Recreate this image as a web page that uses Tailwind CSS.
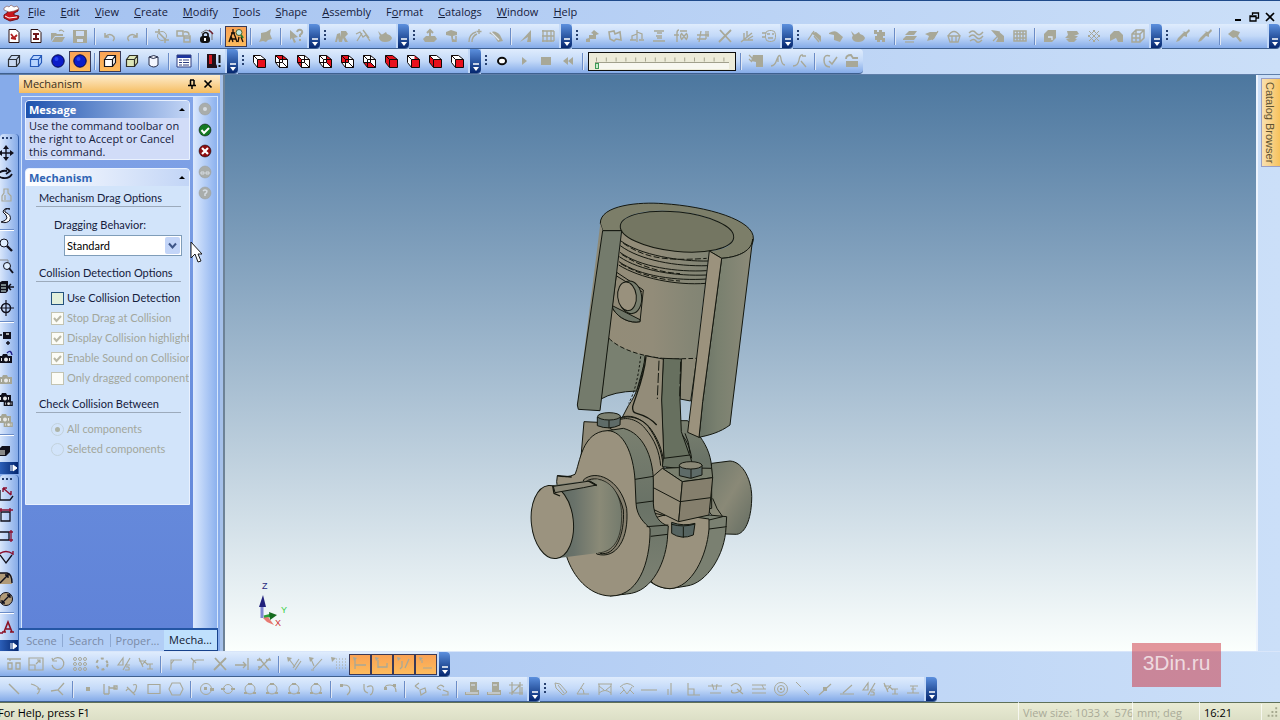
<!DOCTYPE html>
<html lang="en">
<head>
    <meta charset="UTF-8">
    <meta name="viewport" content="width=device-width, initial-scale=1.0">
    <title>Mechanism</title>
    <script src="https://cdn.jsdelivr.net/npm/@tailwindcss/browser@4"></script>
</head>
<body class="h-screen flex flex-col overflow-hidden bg-linear-to-r from-[#a3c1f0] to-[#cbdff8] text-[#15203c] text-[11px] leading-4 font-['Open_Sans',sans-serif]">

    <!-- Menu bar -->
    <header class="flex items-center h-6 shrink-0 border-t border-[#1f4a8a] pl-[2px] pr-1">
        <svg class="w-[18px] h-[18px]" viewBox="0 0 18 18">
            <path d="M2 5l4 2-1 2-3 2v3l6 3 8-2 1-3-5-1V9l4-2V4z" fill="#c8141c" stroke="#701015"/>
            <path d="M2 4l3-2 2 1 2-2 3 2 3-1 2 3-5 2-5 1-5-2z" fill="#fff" stroke="#7a4a4a" stroke-width=".6"/>
            <path d="M3 12l4 2 8-1" stroke="#fff" fill="none"/>
        </svg>
        <nav class="flex items-center gap-[15px] ml-2 pb-px" id="menu"></nav>
        <div class="ml-auto mt-2 flex items-center gap-1 text-black">
            <button aria-label="Minimize" class="w-3 h-3"><svg viewBox="0 0 12 12"><path d="M3 9h6" stroke="currentColor" stroke-width="2"/></svg></button>
            <button aria-label="Restore" class="w-3 h-3"><svg viewBox="0 0 12 12" fill="none" stroke="currentColor" stroke-width="1.3"><path d="M4.500 4V2h6v5H8M2 5h6v5H2zM2 5.500h6"/></svg></button>
            <button aria-label="Close" class="w-3 h-3"><svg viewBox="0 0 12 12"><path d="M2 2l8 8M10 2l-8 8" stroke="currentColor" stroke-width="1.700"/></svg></button>
        </div>
    </header>

    <!-- Top toolbars -->
    <div class="flex h-[25px] shrink-0">
        <div data-tools="newdoc newpart open save | undo redo | orbit copybox locked | *tree | blob | help" data-cap></div>
        <div data-tools=": people zigzag teapot" data-cap></div>
        <div data-tools=": extrude lathe sweep shell | letter mesh" data-cap></div>
        <div data-tools=": stepup loftbox fork springs fx hash cross leafy mask" data-cap></div>
        <div data-tools=": fillet ball teapot gears | layers patch basket waves stripes grid | block1 stack weave block2 block3" data-cap></div>
        <div data-tools=": pipette pipette | hammer" data-cap data-grow></div>
    </div>
    <div class="flex h-[26px] shrink-0 border-b border-[#5f7ea8]">
        <div data-tools="wire wireblue sphere *sphere | *boxsolid boxhidden cylinder | list | book" data-cap></div>
        <div data-tools=": face1 face2 face3 face4 face5 face6 face7 face8 face9 face10" data-cap></div>
        <div data-tools=": record play stop rewind | @slider | keys curve1 curve2 | loop movie"></div>
    </div>

    <!-- Work area -->
    <main class="flex flex-1 min-h-0">
        <!-- Vertical toolbars -->
        <aside class="w-[19px] shrink-0 flex flex-col overflow-hidden bg-[#86abea]">
            <div class="h-[59px] shrink-0"></div>
            <div data-side=": move rotate *figure spline | zoom zoomwin cubein target | cubemove camrot *cam cams *cams2 | cubedown"></div>
            <div data-side=": dim1 dim2 dim3 dim4 dim5 dim6 | dimtext"></div>
        </aside>

        <!-- Mechanism panel -->
        <section class="w-[201px] shrink-0 flex flex-col bg-[#86abea]">
            <div class="h-[18px] shrink-0 flex items-center pl-1 pr-1 bg-linear-to-b from-[#fdeccb] to-[#f5bd5e] text-[#3a3020]">
                <h1 class="mr-auto">Mechanism</h1>
                <button aria-label="Pin" class="w-4 h-4 text-black"><svg viewBox="0 0 16 16" fill="none" stroke="currentColor" stroke-width="1.500"><path d="M6 4h4M6.500 4v5M10 4v5M4 9.500h8M8 9v4"/></svg></button>
                <button aria-label="Close panel" class="w-4 h-4 text-black"><svg viewBox="0 0 16 16"><path d="M4.500 4.500l7 7M11.500 4.500l-7 7" stroke="currentColor" stroke-width="1.700"/></svg></button>
            </div>
            <div class="flex flex-1 min-h-0 mt-[3px] mx-[2px] border-t border-l border-r border-[#d6e7fd]">
                <div class="flex-1 min-w-0 px-[3px] pt-[3px] bg-linear-to-b from-[#83a5e8] via-[#6b90de] to-[#6083d8]">
                    <section class="border border-[#e9f1fe] rounded-t-sm overflow-hidden bg-[#d1dcf8]">
                        <div class="h-[17px] flex items-center justify-between px-[3px] bg-linear-to-r from-[#1d52ad] to-[#c3d5f5]">
                            <h2 class="text-white font-bold">Message</h2>
                            <button aria-label="Collapse message" class="text-black"><svg class="w-[9px] h-2" viewBox="0 0 9 8"><path d="M2 5l3-3 3 3z" fill="currentColor"/></svg></button>
                        </div>
                        <p class="px-[3px] pt-px pb-px leading-[13px]">Use the command toolbar on the right to Accept or Cancel this command.</p>
                    </section>
                    <section class="mt-2 border border-[#e9f1fe] rounded-t-sm overflow-hidden bg-[#d2e4fa] font-[Lato,sans-serif]">
                        <div class="h-[17px] flex items-center justify-between px-[3px] bg-linear-to-r from-white to-[#c2d5f6] font-['Open_Sans',sans-serif]">
                            <h2 class="text-[#2f64b4] font-bold">Mechanism</h2>
                            <button aria-label="Collapse mechanism" class="text-black"><svg class="w-[9px] h-2" viewBox="0 0 9 8"><path d="M2 5l3-3 3 3z" fill="currentColor"/></svg></button>
                        </div>
                        <div class="pl-[10px] pt-1 pb-[45px]">
                            <h3 class="pl-[3px] mr-2 border-b border-[#9caabb]">Mechanism Drag Options</h3>
                            <label for="drag" class="block mt-[10px] pl-[18px]">Dragging Behavior:</label>
                            <div class="relative ml-7 mr-[7px] mt-[2px]">
                                <select id="drag" class="block w-full h-[21px] appearance-none border border-[#7f9db9] bg-white text-black pl-[2px]">
                                    <option>Standard</option>
                                </select>
                                <svg class="absolute right-[2px] top-[2px] w-[15px] h-[17px] pointer-events-none" viewBox="0 0 15 17"><rect width="15" height="17" rx="2" fill="#c3d5f8"/><path d="M4 6.500l3.500 4 3.500-4" fill="none" stroke="#3f5688" stroke-width="2"/></svg>
                            </div>
                            <h3 class="pl-[3px] mr-2 mt-[9px] border-b border-[#9caabb]">Collision Detection Options</h3>
                            <div class="mt-[6px] pl-[15px]" id="checks"></div>
                            <h3 class="pl-[3px] mr-2 mt-2 border-b border-[#9caabb]">Check Collision Between</h3>
                            <div class="mt-[6px] pl-[15px]" id="radios"></div>
                        </div>
                    </section>
                </div>
                <!-- Command toolbar -->
                <div class="w-6 shrink-0 flex flex-col items-center gap-[5px] pt-1 bg-linear-to-r from-[#dce9fd] to-[#8cb1ee]" id="commands"></div>
            </div>
            <div class="h-[23px] shrink-0 flex items-stretch border-t-2 border-[#2456a5] pl-[2px] mr-[2px] bg-[#b2cef6] text-[#7a8aa6]" role="tablist">
                <button role="tab" class="w-[42px] text-center border-r border-[#8ea9d3] my-1 leading-[14px]">Scene</button>
                <button role="tab" class="w-[48px] text-center border-r border-[#8ea9d3] my-1 leading-[14px]">Search</button>
                <button role="tab" class="w-[53px] text-center my-1 leading-[14px]">Proper...</button>
                <button role="tab" aria-selected="true" class="flex-1 bg-[#bfe0fd] border-b border-r border-[#17428c] text-[#101830]">Mecha...</button>
            </div>
        </section>
        <div class="w-[5px] shrink-0 bg-[#a6c1ea] border-r-2 border-[#6d8296]"></div>

        <!-- 3D view -->
        <section class="relative flex-1 min-w-0 overflow-hidden bg-linear-to-b from-[#4c779f] to-[#fbfffd]">
            <svg class="absolute left-[295px] top-[120px] w-[250px] h-[410px]" viewBox="0 0 750 1230" fill="none" stroke="#14170f" stroke-width="3" stroke-linejoin="round" role="img" aria-label="Piston and crankshaft assembly">
                <defs>
                    <linearGradient id="wall"><stop offset="0" stop-color="#697265"/><stop offset=".35" stop-color="#79806f"/><stop offset="1" stop-color="#8d8b79"/></linearGradient>
                    <linearGradient id="piston"><stop offset="0" stop-color="#938c78"/><stop offset=".35" stop-color="#928c79"/><stop offset=".65" stop-color="#858675"/><stop offset="1" stop-color="#7c8172"/></linearGradient>
                    <linearGradient id="shaft"><stop offset="0" stop-color="#59635b"/><stop offset=".35" stop-color="#69726a"/><stop offset=".7" stop-color="#8a8a77"/><stop offset="1" stop-color="#747b6d"/></linearGradient>
                    <linearGradient id="rear" x1="0" y1="0" x2="1" y2="1"><stop offset="0" stop-color="#6f786b"/><stop offset=".5" stop-color="#8a8977"/><stop offset="1" stop-color="#646d62"/></linearGradient>
                    <linearGradient id="side" x1="0" y1="0" x2="0" y2="1"><stop offset="0" stop-color="#7a8070"/><stop offset=".45" stop-color="#697266"/><stop offset="1" stop-color="#7e8374"/></linearGradient>
                </defs>
                <!-- cylinder bore behind the piston -->
                <path d="M265 425L243 612Q280 590 350 588L380 480Z" fill="#798070"/>
                <path d="M484 480L532 480L512 618L480 612Z" fill="#8b8876"/>
                <!-- rear shaft and web -->
                <path d="M575 805L630 798C670 800 698 860 695 915C693 975 675 1015 650 1018L617 1017L560 940Z" fill="url(#rear)"/>
                <path d="M480 677L503 677L540 725C562 755 576 790 575 830L575 940L520 950L430 800Z" fill="url(#side)"/>
                <path d="M400 945L567 960L620 965L618 997C615 1080 560 1165 500 1173L450 1181C425 1180 400 1170 385 1155Z" fill="#7a8071"/>
                <path d="M410 950L567 972L567 1002C560 1085 515 1178 450 1181C425 1180 400 1170 390 1155Z" fill="#9a927e"/>
                <path d="M567 975L608 965M567 1002L620 995M578 910Q590 945 608 965" />
                <!-- piston -->
                <path d="M301 95L305 107L290 230L268 400L267 430C300 465 380 490 460 492L530 490L545 350L568 168L640 130Z" fill="url(#piston)" stroke="none"/>
                <path d="M267 430C300 465 380 490 460 492L530 490" stroke-dasharray="14 7"/>
                <path d="M303 138C360 180 480 200 566 198M301 152C360 196 470 215 563 212M300 172C360 216 470 232 560 227M298 185C360 228 470 244 560 240M297 200C360 244 470 258 560 252M296 210C360 250 470 272 558 265"/>
                <path d="M310 145C370 184 420 200 560 190M305 178C360 214 420 232 480 236M302 206C360 240 420 254 480 258" stroke-dasharray="18 7"/>
                <path d="M290 232L370 285L360 380C330 386 296 370 279 342L277 330Z" fill="#8f8976"/>
                <path d="M277 332L360 374L360 380C330 386 296 370 279 342Z" fill="#6e7567"/>
                <path d="M290 243L366 290"/>
                <ellipse cx="331" cy="307" rx="34" ry="49" transform="rotate(-6 331 307)" fill="#777d6d"/>
                <ellipse cx="321" cy="304" rx="28" ry="43" transform="rotate(-6 321 304)" fill="#99917d"/>
                <!-- cylinder -->
                <path stroke="none" fill-rule="evenodd" d="M248 107L241 85C240 30 360 20 430 26C560 34 705 75 700 132C698 165 660 186 605 190L568 168C610 166 640 150 641 128C640 85 540 48 430 47C355 46 300 65 301 95L305 107Z" fill="#7c7e69"/>
                <path d="M305 107L248 107L241 85C240 30 360 20 430 26C560 34 705 75 700 132C698 165 660 186 605 190L568 168"/>
                <ellipse cx="471" cy="110" rx="171" ry="59" transform="rotate(6 471 110)" fill="#747662"/>
                <path d="M241 85L248 107L180 600L172 635Z" fill="#8d8a78" stroke="none"/>
                <path d="M248 107L305 107L240 647L175 643L172 630Z" fill="#747b6c"/>
                <path d="M605 190C660 186 697 165 698 132L637 630L630 690C600 712 570 720 537 727L548 620Z" fill="url(#wall)"/>
                <path d="M568 168L605 190L548 620L537 727L503 712L515 615Z" fill="#9b927d"/>
                <!-- connecting rod -->
                <path d="M430 490L484 492L480 615L484 710L512 790L432 800L424 615Z" fill="#67705f"/>
                <path d="M375 482L430 492L425 615L432 800L300 680L325 632C350 600 370 540 375 482Z" fill="#938c79"/>
                <path d="M362 484C355 545 345 590 326 625" stroke-dasharray="7 6"/>
                <path d="M378 484C372 550 348 600 338 635Q336 653 350 655Q388 665 410 690" stroke-width="4"/>
                <path d="M417 497L412 612M482 500L479 605" stroke-dasharray="30 7"/>
                <!-- big end -->
                <path d="M192 680L235 682L300 695L290 760L180 810L183 785Z" fill="#8f8976"/>
                <path d="M270 700C295 650 350 655 385 695C410 730 425 765 430 815L500 940L400 970L340 740Z" fill="#928b78"/>
                <path d="M290 680C315 660 355 675 375 700C405 735 418 770 422 812M300 671C325 658 365 670 387 695C414 729 426 765 430 795"/>
                <path d="M430 790L510 780L515 800L475 820L427 815Z" fill="#697162"/>
                <path d="M487 720Q510 750 515 790M495 715Q508 740 510 775"/>
                <!-- clamp block -->
                <path d="M427 820L475 818L575 820L578 848L487 860Z" fill="#7a7f6e"/>
                <path d="M398 845L427 820L487 860L476 980L400 943Z" fill="#948d79"/>
                <path d="M487 860L578 848L567 960L476 980Z" fill="#857f6d"/>
                <path d="M400 878L480 920L572 908"/>
                <path d="M478 812L478 842L512 850L546 840L546 810Z" fill="#5e6b68"/>
                <ellipse cx="512" cy="811" rx="34" ry="11" fill="#8a8876"/>
                <path d="M513 822V850"/>
                <path d="M455 982L455 1015Q485 1035 520 1020L525 985Q490 995 455 982Z" fill="#566461"/>
                <path d="M455 988Q490 998 525 987M490 995V1028"/>
                <path d="M232 666L232 692Q268 706 300 690L301 664Z" fill="#5e6b68"/>
                <ellipse cx="267" cy="664" rx="34" ry="11" fill="#7c8070"/>
                <path d="M267 676V700"/>
                <!-- front web -->
                <path d="M262 707L310 700C370 715 398 785 400 855L400 925C402 965 420 985 445 993L443 1020C440 1095 400 1192 320 1197L270 1203Z" fill="url(#side)"/>
                <path d="M262 707C310 707 340 775 345 855L348 925C350 965 375 985 390 1000C392 1070 370 1205 270 1203C205 1200 160 1145 140 1085L110 860L112 842Q140 850 165 838C180 805 185 710 262 707Z" fill="#9a927e"/>
                <path d="M345 853L400 844M348 925L400 918M380 995L445 990M392 1024L443 1018M405 955L435 962"/>
                <!-- front shaft -->
                <path d="M190 855C225 822 300 850 320 940C328 1030 290 1095 230 1077Z" fill="#857f6e"/>
                <path d="M195 862C225 835 290 860 310 945C315 1020 285 1085 240 1075"/>
                <path d="M85 872L235 853C285 862 306 915 305 965C304 1035 280 1070 235 1074L110 1090Z" fill="url(#shaft)" stroke="none"/>
                <path d="M235 853C285 862 306 915 305 965C304 1035 280 1070 235 1074" stroke-width="2"/>
                <ellipse cx="97" cy="981" rx="63" ry="110" transform="rotate(-6 97 981)" fill="#9b937f"/>
                <path d="M100 874L210 858L230 870L190 878L105 893Z" fill="#8a8776"/>
                <path d="M98 873L102 895L120 903M112 842L155 846M205 858L230 872" stroke-width="4"/>
            </svg>
            <!-- axis triad -->
            <svg class="absolute left-[30px] bottom-5 w-[36px] h-[50px]" viewBox="0 0 36 50" font-family="Liberation Sans" font-size="9">
                <path d="M7 37V23" stroke="#7f86d2" stroke-width="3"/>
                <path d="M4 26l4-12 3 12z" fill="#20207c"/>
                <path d="M9 36l8-2" stroke="#2aa03a" stroke-width="3"/>
                <path d="M14 31l8 3-7 5z" fill="#136b1e"/>
                <path d="M8 37l5-1 6 8-7-3z" fill="#e77a72"/>
                <text x="7" y="8" fill="#28287c">Z</text>
                <text x="26" y="32" fill="#38d048">Y</text>
                <text x="20" y="45" fill="#d03030">X</text>
            </svg>
        </section>
        <aside class="w-6 shrink-0 pt-[3px] pl-[3px] border-l-2 border-[#eef4fd]">
            <button class="w-full h-[89px] flex items-center justify-center border border-r-0 border-[#9a9fc4] bg-linear-to-r from-[#f8e0b0] to-[#f7c25a] text-[#5f5230] pr-[2px] font-['Liberation_Sans',sans-serif]">
                <span class="[writing-mode:vertical-rl]">Catalog Browser</span>
            </button>
        </aside>
    </main>

    <!-- Bottom toolbars -->
    <div class="flex h-[26px] shrink-0 border-t border-[#d9e6fa]">
        <div data-tools="align scale spin array polar trim joint | corner corner2 cross extend cross2 | snap1 snap2 snapgrid *c1 *c2 *c3 *c4" data-cap></div>
    </div>
    <div class="flex h-[25px] shrink-0">
        <div data-tools="line bend branch | dot nodes chain rect hexagon | circ1 circ2 circ3 circ3 circ3 circ3 | arc1 arc2 arc3 | flip1 flip2 | cab cab crop" data-cap></div>
        <div data-tools=": tag angle vee veearc hline vline perp hash2 wrench equal concentric tangent mid angle2 trim joint ground" data-cap></div>
    </div>

    <!-- Status bar -->
    <footer class="h-[18px] shrink-0 flex items-center border-t border-[#5f7058] bg-linear-to-b from-[#e9ebd4] to-[#dcdfc6] text-black whitespace-nowrap">
        <p class="mr-auto -ml-[2px] pt-[3px]">For Help, press F1</p>
        <p class="w-[114px] pl-1 pt-[3px] border-l border-white/70 text-[#a9aa98]">View size: 1033 x&nbsp; 576</p>
        <p class="w-[67px] pl-1 pt-[3px] border-l border-white/70 text-[#a9aa98]">mm; deg</p>
        <p class="w-[62px] pl-1 pt-[3px] border-l border-white/70">16:21</p>
        <svg class="w-[19px] h-4 border-l border-white/70" viewBox="0 0 19 16"><path d="M14 4h2M10 8h2M14 8h2M6 12h2M10 12h2M14 12h2" stroke="#a5a88e" stroke-width="2"/></svg>
    </footer>

    <!-- Watermark -->
    <div class="absolute right-[59px] bottom-[33px] w-[89px] h-11 flex items-center justify-center pb-1 bg-[#cc303c]/50 text-white/70 text-[21px] font-['Liberation_Sans',sans-serif]">3Din.ru</div>

    <!-- Pointer -->
    <svg class="absolute left-[190px] top-[241px] w-3 h-[22px]" viewBox="0 0 12 22"><path d="M1 1v16l4-4 3 8 3-1-3-7h4z" fill="#fff" stroke="#1a1a1a"/></svg>

    <script>
        // Path helpers, 16x16 grid
        const s = (d, w = 1.2, c = 'currentColor') => `<path d="${d}" fill="none" stroke="${c}" stroke-width="${w}"/>`;
        const f = (d, c = 'currentColor') => `<path d="${d}" fill="${c}"/>`;
        const outline = 'M2.500 2.500h7l5 4v8h-8l-4-5z';
        const cubeLines = outline + 'M2.500 9.500h7v-7M9.500 9.500l5 5M6.500 14.500v-8h8M2.500 2.500l4 4';
        const fills = red => f(outline, '#fff') + red.map(d => f(d, '#e8101c')).join('');
        const cube = (...red) => fills(red) + s(cubeLines, 1, '#100808');
        const solid = (...red) => fills(red) + s(outline + 'M2.500 2.500l4 4h8M6.500 6.500v8', 1, '#100808');
        const FRONT = 'M6.500 6.500h8v8h-8z', TOP = 'M2.500 2.500h7l5 4h-8z', LEFT = 'M2.500 2.500l4 4v8l-4-5z';
        const BACK = 'M2.500 2.500h7v7h-7z', RIGHT = 'M9.500 2.500l5 4v8l-5-5z', BOTTOM = 'M2.500 9.500h7l5 5h-8z';
        const box = (c, fill) => f('M2 6l3-3h9v7l-3 3H2z', fill) + s('M2.500 6.500h8v7h-8zM2.500 6.500l3-4h8v7l-3 4M10.500 6.500l3-4', 1.2, c);
        const doc = '<path d="M3 1.500h7l3 3v10H3z" fill="#fff" stroke="#2a1010"/>';
        const ball = '<circle cx="8" cy="8" r="6.200" fill="#0c1cc8" stroke="#02084a"/><circle cx="6.500" cy="6" r="2" fill="#2444ee"/>';
        const circle = '<circle cx="8" cy="8" r="4.500" fill="none" stroke="currentColor"/>';
        const blk = '#10101c', brn = '#8a1030';
        const camera = c => f('M1 6h3l1-2h4l1 2h4v7H1z', c) + '<circle cx="8" cy="9.500" r="2" fill="#e8e8e8"/>' + f('M3 8h1v3H3zM11 8h1v3h-1z', '#e8e8e8');

        const icons = {
            newdoc: doc + s('M5 6l3 4 3-3M5 10l5 1', 1.8, '#b02020'),
            newpart: doc + s('M5 6h6M8 6v5M5 11h6', 2, '#701818'),
            open: f('M1 13V5h5l1 1h6v2H5z') + f('M5 9h10l-3 5H2z') + s('M9 3q3-2 5 1'),
            save: f('M1 2h14v13H1z') + f('M4 3h8v5H4z', '#cddcf3') + f('M5 11h6v3H5z', '#cddcf3'),
            undo: s('M3 5v4h4M3 9q5-5 9 0 1 2-1 4', 1.5), redo: s('M13 5v4H9M13 9Q8 4 4 9q-1 2 1 4', 1.5),
            orbit: circle + s('M1 4h4V1M5 5l7 7M15 12h-4v3', 1.6),
            copybox: s('M1 3h6v5H1zM8 8h6v6H8zM8 4q5-1 5 3M8 10h6', 1.5),
            locked: s('M3 5l5-3 6 2v8', 1, '#777') + s('M5 9V6q3-3 5 0v3', 1.7, '#111') + '<rect x="2" y="8" width="10" height="7" rx="3" fill="#111"/>' + f('M6 10h2v3H6z', '#fff') + s('M11 2l4 4', 1.5, '#702030'),
            tree: s('M5 1v3M5 4l-2 4M5 4l2 4M3 8l-2 6M3 8l2 6M7 8l2 6M2 11h6M11 9l-1 5M13 9l2 5M3 5h4', 1.3, '#181008') + '<circle cx="11" cy="4.500" r="3" fill="#bfe8e0" stroke="#50602a"/>' + s('M13 7l2 3', 2, '#2a7a30'),
            blob: f('M3 5l5-1 5-3-1 5 2 5-4 1-2 2-3-1-4 1 2-4z'),
            help: f('M2 2l8 7-4 1 2 4-2 1-2-5-2 2z') + s('M9 4q1-3 4-2 3 2-1 5v2M12 11v2', 2),
            people: f('M2 14l2-8 3-1 1 9H6l-1-4-1 4zM8 3h5l2 3-3 3 3 5h-3l-2-4-1 4H7z'),
            zigzag: s('M1 6l4-2 3 5 3-2 4 6M2 13l5-8M8 2l6 8', 1.3),
            teapot: f('M2 10q0-3 4-4l3-2 1 2q4 1 5 4-1 4-7 4-5 0-6-4z') + f('M1 3l4 4-2 1z'),
            extrude: f('M1 11l3-3h9l2 3-3 3H3z') + s('M8 10V3M5 5l3-3 3 3', 2),
            lathe: f('M2 4l5-2 6 2v3l-4 1v3l3 1v2H8l-1-6-5-1z') + s('M12 8v6', 1.5),
            sweep: s('M3 14Q3 6 10 4M6 14q0-6 5-8M13 1v5M10.500 3.500h5', 1.4),
            shell: f('M1 5q6-4 11 2l3 6-5 1-4-6z') + s('M3 4l8 8', 1.2, '#e0e8f4'),
            letter: f('M13 2v12H9l1-5-8 5z'), mesh: s('M2 3h12M2 13h12M3 2v12M7 3v11M11 2v12M14 3v10M2 8h12', 1.3),
            stepup: f('M9 2l5 4-3 1v4H5v3H1v-3l3-1V7h4V6L6 5z'), loftbox: s('M2 4l5-1 1 3 5-2 1 8-5-1-2 2-4-2z', 1.6),
            fork: s('M8 14V2M8 4l5 2v5M8 6L3 8v4M1 12h6M10 12h5', 1.3), springs: s('M3 3h10M6 5h5M5 8h6M6 10h5M2 13h12', 1.4),
            fx: s('M6 2Q4 2 4 5v9M1 7h5M9 5q-3 3 0 7M13 5q3 3 0 7M9 6l4 5M13 6l-4 5M7 3h7', 1.4), hash: s('M6 3L4 14M11 3v8M2 7h12M2 11h9M13 3v6', 1.3),
            cross: s('M3 2l11 12M14 2L2 14', 1.8), cross2: s('M3 2l10 12M14 2L2 14M1 4h5M10 4h5M2 11h4', 1.3),
            leafy: s('M2 14l11-9M5 5v7h9M8 3v6M14 8l-5 3', 1.4), mask: '<rect x="4.500" y="2.500" width="10" height="11" rx="4" fill="none" stroke="currentColor"/>' + s('M6 6h3M11 6h2M7 10h5M1 5h4M1 9h4', 1.3),
            fillet: f('M5 5l5-1 5 4v6L9 8z') + s('M2 12l6-9M8 8l5 6', 1.3), ball: f('M1 5q5-3 8-1l6 5-3 5-6-2V7L1 6z'),
            gears: f('M2 2h3v2h2V2h3v2h3v4h-2v2h2v4h-3v-2H8v2H5v-2H3V8h2V6H2z'), layers: f('M1 11l3-3h11l-3 4H1zM3 7l4-4h8l-3 4z') + s('M3 14h9'),
            patch: f('M1 6l5-2h8l-4 7-7 2 2-5z') + s('M8 12l6-9'), basket: s('M2 8h12l-2 6H4zM2 8q6-9 12 0M6 8v6M10 8v6', 1.3),
            waves: s('M1 5q4-4 7 0t7-1M1 9q4-4 7 0t7-1M2 13q4-3 6 0t6-1', 1.4), stripes: f('M1 2l7 1 6 5v6H6l2-4z') + s('M3 13l5-5M9 3v11', 1.2),
            grid: s('M2 3h12v10H2zM2 6h12M2 10h12M5 3v10M8 3v10M11 3v10', 1.5),
            block1: f('M2 6l4-4h8v8l-4 4H2z') + s('M6 9h4v3', 1.3, '#d5e2f6'), stack: f('M3 3h10l2 3-5 2h4l-3 3h2l-3 3H5l-3-3 4-1H1l3-3z'),
            weave: s('M3 3l10 10M13 3L3 13M7 2l7 7M2 7l7 7M9 2L2 9M14 7l-7 7', 1), block2: f('M2 7l4-4h5l4 4v7h-5l-2-4-6 3z'),
            block3: s('M2 6l4-4h8v8l-4 4H2zM2 6h8v8M10 6l4-4M6 2v12M2 10h8', 1.5),
            pipette: f('M1 14l2-4 6-6-2-1 4 1 3-3 1 2-3 3v3L9 8l-5 5z'), hammer: f('M1 6l5-4 7 2-2 4 4 5-2 1-4-5-3 1z'),
            wire: box('#2c3138', '#c9d9f0'), wireblue: box('#2458b8', '#b7d4ff'), sphere: ball,
            boxsolid: box('#15151c', '#fff'), boxhidden: box('#303028', '#dde6b8'),
            cylinder: '<path d="M3 4v8q5 4 9 0V4q-4-3-9 0 4 3 9 0" fill="#f4f7ff" stroke="#28304c"/>',
            list: f('M1 2h14v12H1z', '#fff') + f('M1 2h14v3H1z', '#1c35a0') + s('M1 2h14v12H1zM3 7h3M7 7h6M3 9.500h3M7 9.500h6M3 12h3M7 12h6', 1, '#2c3d80'),
            book: f('M1 1h9v10l1 2v2H1z', '#201018') + f('M3 2h3v9H3z', '#d01820') + s('M13.500 2v8M13.500 12v2', 2, '#111'),
            face1: solid(FRONT), face2: cube(TOP), face3: cube(LEFT), face4: cube(RIGHT), face5: cube(BACK), face6: cube(BOTTOM),
            face7: solid(FRONT, TOP, LEFT), face8: solid(FRONT, RIGHT), face9: solid(FRONT, LEFT), face10: solid(FRONT),
            record: '<ellipse cx="8" cy="8" rx="4" ry="3.300" fill="#fff" stroke="#0a0a0a" stroke-width="2"/>',
            play: f('M6 4l5 4-5 4z'), stop: f('M3 4h10v8H3z'), rewind: f('M8 4v8L3 8zM13 4v8L8 8z'),
            keys: f('M5 2h10v12H8V9L3 8z') + s('M1 2l5 5M1 6l3 3'), curve1: s('M1 13q4 0 6-7 3-7 4 0 1 6 4 6M8 4v5', 1.3), curve2: s('M1 13q5 0 6-6t4-5M9 8l5 6M10 3h4', 1.3),
            loop: s('M8 3Q2 1 2 7q0 7 6 7M7 8l3 3 5-7', 1.5), movie: f('M2 8h12v6H2z') + s('M2 6q0-4 5-4l2 3h5', 1.8),
            align: s('M1 3h14M2 7h4v6H2zM10 7h4v6h-4zM4 3v2', 1.3), scale: s('M1 2h14v12H1zM1 9h6v5M8 8l4-4M9 4h3v3', 1.2),
            spin: s('M3 4a6 6 0 1 1-1 5M2 2l1 3h4', 1.2), array: [3, 8, 13].map(x => [3, 8, 13].map(y => `<circle cx="${x}" cy="${y}" r="1.500" fill="none" stroke="currentColor"/>`).join('')).join(''),
            polar: '<circle cx="8" cy="8" r="5.500" fill="none" stroke="currentColor" stroke-width="2" stroke-dasharray="3 3"/>',
            trim: s('M2 9l5-7v7zM9 9h5M7 14l7-12M10 11q4-1 3 3h-4', 1.2), joint: s('M1 5h5l4 4M4 9l4-5M9 8h6M9 13h6M12 8v5M1 2l4 9', 1.2),
            corner: s('M3 14V4h11M3 8l3-4', 1.1), corner2: s('M3 14V8q0-4 4-4h7M1 2l5 5', 1.1), extend: s('M1 9h11M9 6l3 3-3 3M14 2v12', 1.3),
            snap1: f('M1 1l5 1-4 4z') + s('M3 3l6 8M7 12l6-9M9 14l6-9', 1.1), snap2: f('M1 1l5 1-4 4z') + s('M3 3l3 7M5 13l9-10M3 14h3', 1.1),
            snapgrid: f('M1 1l5 1-4 4z') + '<path d="M6 3h10M6 6h10M6 9h10M6 12h10" stroke="currentColor" stroke-dasharray="1 2"/>',
            c1: f('M1 1l4 1-3 3z') + s('M3 3v10M3 9h11', 1.3), c2: f('M1 1l4 1-3 3z') + s('M4 4v8M4 11h9v-4', 1.3), c3: f('M1 1l4 1-3 3z') + s('M6 5v6l-2 2M13 3l-4 9', 1.3), c4: f('M1 1l4 1-3 3z') + s('M5 12h9M4 4v3', 1.1),
            line: s('M3 3l10 10', 1.4), bend: s('M3 3q7 2 8 5t-2 5M9 8h4', 1.2), branch: s('M1 10l7-1 6-7M8 9l5 5', 1.3), dot: f('M6 6h4v4H6z'),
            nodes: s('M2 3v10M2 13h5M7 5v8M7 7h7M12 5h3v3h-3z', 1.3), chain: s('M2 10q2-4 5 0t5-2q2-6-3-4M3 6l8 8', 1.2), rect: s('M2 3.500h12v9H2z', 1.2), hexagon: s('M4 2h8l3 6-3 6H4L1 8z', 1.1),
            circ1: '<circle cx="8" cy="8" r="5.500" fill="none" stroke="currentColor"/>' + f('M6 6h3v3H6zM12 7h4v3h-4z'), circ2: circle + f('M1 7h4v2H1zM11 7h4v2h-4z'), circ3: '<circle cx="8" cy="8" r="5" fill="none" stroke="currentColor"/>' + f('M6 2h4v2H6zM2 11h3v2H2zM11 11h3v2h-3z'),
            arc1: s('M3 4h3q6 0 6 5 0 3-3 5', 1.2) + f('M2 3h3v3H2z'), arc2: s('M4 3v4q0 4 4 5M7 6q6-3 6 2t-3 6', 1.2), arc3: s('M3 7q0-3 5-3 6 0 6 7', 1.2) + f('M2 6h3v3H2zM11 3h3v3h-3z'),
            flip1: s('M3 5l4-3M3 5l4 3M8 9l5-2 1 4-5 3z', 1.2), flip2: s('M3 7q3-5 7-1M9 9l5 2v3H8M3 7l4 2', 1.2),
            cab: f('M6 1h7v8h2v5H1v-3h5z') + s('M7 4h4M2 12h12', 1.2, '#dbe6f7'), crop: s('M1 4h14M1 12h14M4 1v13M12 1v13M4 12l8-8M14 6v8', 1.2),
            tag: s('M2 2l5 1 7 8-4 3-7-7zM5 4l6 8', 1), angle: s('M9 2L2 13h12M6 7q3 1 3 6', 1), vee: s('M2 3v11M14 3v11M2 5l5 4M14 5L9 9M2 12q6-5 12 0M1 3h14', 1), veearc: s('M1 6q7-7 14 0M3 6l5 7 5-7M1 13l4-4M15 13l-4-4', 1),
            hline: s('M0 9h16', 1.1), vline: s('M8 2v12M5 8v6', 1.1), perp: s('M3 2v12h12M3 8h6v6', 1.1), hash2: s('M1 5h14M3 12h11M5 3l2 6M10 3l-1 6', 1.1), wrench: s('M2 5q5-5 9 0t-5 7q-5 0-3-3M8 8l6 5', 1.2), equal: s('M1 4h14M1 8h14M1 12h14M11 4l2 4', 1),
            concentric: '<circle cx="8" cy="8" r="6.500" fill="none" stroke="currentColor"/><circle cx="8" cy="8" r="3.500" fill="none" stroke="currentColor"/>' + f('M7 7h2v2H7z'),
            tangent: s('M1 1l5 5M9 9l5 5', 1), mid: s('M2 14L14 3', 1.1) + f('M6 6h4v4H6z'), angle2: s('M1 13h14M4 12l9-8', 1.1), ground: s('M2 12h12M5 5h8M8 5v7M6 8h5', 1.1),
            move: f('M8 0l3 4H5zM8 16l3-4H5zM0 8l4-3v6zM16 8l-4-3v6z', blk) + s('M8 4v8M4 8h8', 1.4, blk),
            rotate: s('M14 8q-3 5-9 4-6-1-4-5 3-3 8-2M8 2l4 3-4 3', 1.8, blk), figure: s('M6 2h4v4l3 3v5H4V9l2-3zM7 8v5', 1.2),
            spline: '<path d="M12 1Q6 0 7 4q7 3 5 8-3 4-9 2 5-1 6-4 0-3-4-6 1-5 7-3z" fill="#fff" stroke="#10101c"/>', zoom: '<circle cx="6" cy="6" r="4" fill="#dfeeff" stroke="#10101c"/>' + s('M9 9l5 5', 2.4, blk),
            zoomwin: s('M1 2h9v6', 1, '#888') + '<circle cx="9" cy="8" r="3.500" fill="#dfeeff" stroke="#10101c"/>' + s('M11 10l4 5', 2, blk),
            cubein: f('M1 4l3-2h6v10l-2 2H1z', blk) + s('M3 6h5M3 9h5M3 12h5', 1.5, '#9aa') + s('M16 8h-5M13 5l-3 3 3 3', 1.5, blk), target: '<circle cx="8" cy="8" r="4.500" fill="none" stroke="#10101c" stroke-width="1.500"/>' + s('M8 0v16M0 8h16', 1.2, blk),
            cubemove: f('M5 3h8v7H5z', blk) + s('M8 5h3', 2, '#aaa') + s('M0 6h4M10 12v4M8 14h4', 1.4, blk), camrot: camera(blk) + s('M9 3q4-4 5 2', 1.4, '#20208a'), cam: camera('#a5a595'),
            cams: '<g transform="translate(-1 -3)">' + camera(blk) + '</g><g transform="translate(5 5) scale(.7)">' + camera(blk) + '</g>', cams2: '<g transform="translate(-1 -3)">' + camera('#a5a595') + '</g><g transform="translate(5 5) scale(.7)">' + camera('#a5a595') + '</g>',
            cubedown: f('M1 7l3-3h8v6l-4 4H1z', blk) + f('M2 8h5v5H2z', '#888'),
            dim1: s('M2 4v10h10l3-4', 1.3, blk) + s('M5 2l8 7M5 2v4M5 2h4M13 9V5', 1.4, brn), dim2: s('M3 14V5h9v9z', 1.3, blk) + s('M1 3h14M3 1v4M12 1v4', 1.3, brn), dim3: s('M1 4h10v8H1z', 1.3, blk) + s('M13 2v12M11 4h4M11 12h4', 1.3, brn),
            dim4: s('M2 6l6 8 6-8', 1.3, blk) + s('M1 5q7-5 14 0M1 2v4M15 2v4', 1.4, brn), dim5: f('M1 14V3h9l4 3v8z', '#b09a78') + s('M1 3h8q5 1 5 10M2 13l8-8M7 5h3v3', 1.4, blk), dim6: '<circle cx="8" cy="8" r="6.500" fill="#b09a78" stroke="#10101c"/>' + s('M4 12l8-8M9 4h3v3M4 9v3h3', 1.3, blk),
            dimtext: s('M6 12l4-10 4 10M8 9h5M4 12h4M12 12h4', 1.6, '#8a1020') + s('M1 8v5h4', 1.3, brn)
        };

        const svg = (name, cls) => `<svg class="${cls}" viewBox="0 0 16 16">${icons[name] || ''}</svg>`;
        const capIcon = '<svg class="w-[9px] h-3" viewBox="0 0 9 12"><path d="M2 3h6" stroke="#fff" stroke-width="1.500"/><path d="M2 6h6l-3 4z" fill="#fff"/></svg>';
        const sliderBox = `<div class="w-[148px] h-[19px] mx-px bg-[#ecebd9] border border-[#0c0c0c] flex flex-col justify-between px-[6px] pt-1 pb-px">
            <svg class="w-full h-[5px]" viewBox="0 0 134 5" preserveAspectRatio="none"><path d="M1 2.500h133" stroke="#a6a590" stroke-width="4" stroke-dasharray="1 8.800"/></svg>
            <input type="range" value="0" aria-label="Animation frame" class="block w-full h-[7px] appearance-none border-t border-[#a09f8c] bg-white/60 [&::-webkit-slider-thumb]:appearance-none [&::-webkit-slider-thumb]:w-1 [&::-webkit-slider-thumb]:h-[6px] [&::-webkit-slider-thumb]:border [&::-webkit-slider-thumb]:border-[#3d9a56] [&::-webkit-slider-thumb]:bg-[#c9ecce]"></div>`;

        // Horizontal toolbars: ":" grip, "|" separator, "*" pressed, "@" custom widget
        document.querySelectorAll('[data-tools]').forEach(bar => {
            const grow = 'grow' in bar.dataset;
            const items = bar.dataset.tools.split(' ');
            bar.className = 'flex items-center h-[25px] rounded-r-sm bg-linear-to-b from-[#dfecfd] via-[#c3d9f8] to-[#85abe8] border-b border-[#3f608f] text-[#a8a898]' + (grow ? ' flex-1' : '') + (items[0] === ':' ? '' : ' pl-[3px]');
            bar.setAttribute('role', 'toolbar');
            bar.innerHTML = items.map(name => {
                if (name === ':') return '<svg class="w-[10px] h-4" viewBox="0 0 10 16"><path d="M5 2v12" stroke="#27406f" stroke-width="2" stroke-dasharray="2 2"/></svg>';
                if (name === '|') return '<span class="w-px h-[17px] mx-[3px] bg-[#6a8cc7] border-r border-white/80 box-content"></span>';
                if (name === '@slider') return sliderBox;
                const on = name[0] === '*';
                if (on) name = name.slice(1);
                return `<button aria-label="${name}" class="${on ? 'w-[22px] h-[21px] flex items-center justify-center bg-linear-to-b from-[#f9a255] to-[#fdbb5c] border border-[#3a3a58]' : 'w-[22px] h-[21px] flex items-center justify-center'}">${svg(name, 'w-4 h-4 shrink-0')}</button>`;
            }).join('') + ('cap' in bar.dataset ? `<button aria-label="Toolbar options" class="self-stretch ml-auto w-[13px] flex items-end justify-center border-l-2 border-[#c3d9f8] rounded-r-sm bg-linear-to-b from-[#5c90de] to-[#05266f]">${capIcon}</button>` : '');
        });

        // Vertical toolbars, here "*" marks a disabled tool
        document.querySelectorAll('[data-side]').forEach(bar => {
            bar.className = 'shrink-0 flex flex-col w-[19px] rounded-t-sm bg-linear-to-r from-[#d8e6fb] to-[#86abe8] border-r border-[#3663ae] mb-px';
            bar.setAttribute('role', 'toolbar');
            bar.innerHTML = bar.dataset.side.split(' ').map(name => {
                if (name === ':') return '<svg class="w-[14px] h-2 shrink-0" viewBox="0 0 14 8"><path d="M2 4h12" stroke="#27406f" stroke-width="2" stroke-dasharray="2 2"/></svg>';
                if (name === '|') return '<span class="block h-px w-[14px] my-[3px] bg-[#6a8cc7] border-b border-white box-content"></span>';
                name = name.replace('*', '');
                return `<button aria-label="${name}" class="h-[21px] w-3 flex items-center justify-center text-[#a8a898]">${svg(name, 'w-4 h-4 shrink-0')}</button>`;
            }).join('') + '<button aria-label="Toolbar options" class="h-3 mt-[2px] flex justify-end items-center bg-linear-to-r from-[#2c5fb8] to-[#05266f]"><svg class="w-2 h-[10px]" viewBox="0 0 8 10"><path d="M1 2v6M3 2l4 3-4 3z" fill="#fff" stroke="#fff"/></svg></button>';
        });

        document.getElementById('menu').innerHTML = ['<u>F</u>ile', '<u>E</u>dit', '<u>V</u>iew', '<u>C</u>reate', '<u>M</u>odify', '<u>T</u>ools', '<u>S</u>hape', '<u>A</u>ssembly', 'F<u>o</u>rmat', '<u>C</u>atalogs', '<u>W</u>indow', '<u>H</u>elp']
            .map(t => `<button>${t}</button>`).join('');

        const option = (type, text, i, checked, disabled) => `
            <label class="${disabled ? 'flex items-center gap-[3px] h-5 whitespace-nowrap text-[#a3a79c]' : 'flex items-center gap-[3px] h-5 whitespace-nowrap'}">
                <span class="relative shrink-0 w-[13px] h-[13px]">
                    <input type="${type}" name="${type}${type === 'radio' ? '' : i}" ${checked ? 'checked' : ''} ${disabled ? 'disabled' : ''} class="${type === 'radio' ? 'block w-full h-full appearance-none rounded-full border border-[#c3d2dc]' : disabled ? 'block w-full h-full appearance-none border border-[#c3c4b2] bg-[#fcfcf6]' : 'block w-full h-full appearance-none border border-[#24527c] bg-[#e3f0dc]'}">
                    ${checked ? `<svg class="absolute inset-0 pointer-events-none" viewBox="0 0 13 13">${type === 'radio' ? '<circle cx="6.500" cy="6.500" r="2.500" fill="#adb3a6"/>' : '<path d="M3 6l2.500 3L10 4" fill="none" stroke="#b9b8a6" stroke-width="2"/>'}</svg>` : ''}
                </span>${text}
            </label>`;
        document.getElementById('checks').innerHTML = [['Use Collision Detection', false, false], ['Stop Drag at Collision', true, true], ['Display Collision highlight', true, true], ['Enable Sound on Collision', true, true], ['Only dragged component', false, true]]
            .map(([t, c, d], i) => option('checkbox', t, i, c, d)).join('');
        document.getElementById('radios').innerHTML = option('radio', 'All components', 0, true, true) + option('radio', 'Seleted components', 1, false, true);

        document.getElementById('commands').innerHTML = [
            ['Options', '#a9adab', '<circle cx="8" cy="8" r="2" fill="#d5dbe2"/>'],
            ['Accept', '#137a22', '<path d="M4.500 8l2.500 3 5-5" fill="none" stroke="#fff" stroke-width="2"/>'],
            ['Cancel', '#8e0d10', '<path d="M5 5l6 6M11 5l-6 6" stroke="#fff" stroke-width="2.200"/>'],
            ['Preview', '#a9adab', '<path d="M4 8h3v2H4zM9 8h3v2H9z" fill="none" stroke="#d5dbe2"/>'],
            ['Help', '#a9adab', '<path d="M6 6q2-2 4 0 0 2-2 3v2" fill="none" stroke="#d5dbe2" stroke-width="1.500"/>']
        ].map(([t, c, d]) => `<button aria-label="${t}" class="w-4 h-4"><svg viewBox="0 0 16 16"><circle cx="8" cy="8" r="6" fill="${c}" stroke="${c[1] === 'a' ? '#999e9c' : '#000'}" stroke-opacity=".5"/>${d}</svg></button>`).join('');
    </script>
</body>
</html>
